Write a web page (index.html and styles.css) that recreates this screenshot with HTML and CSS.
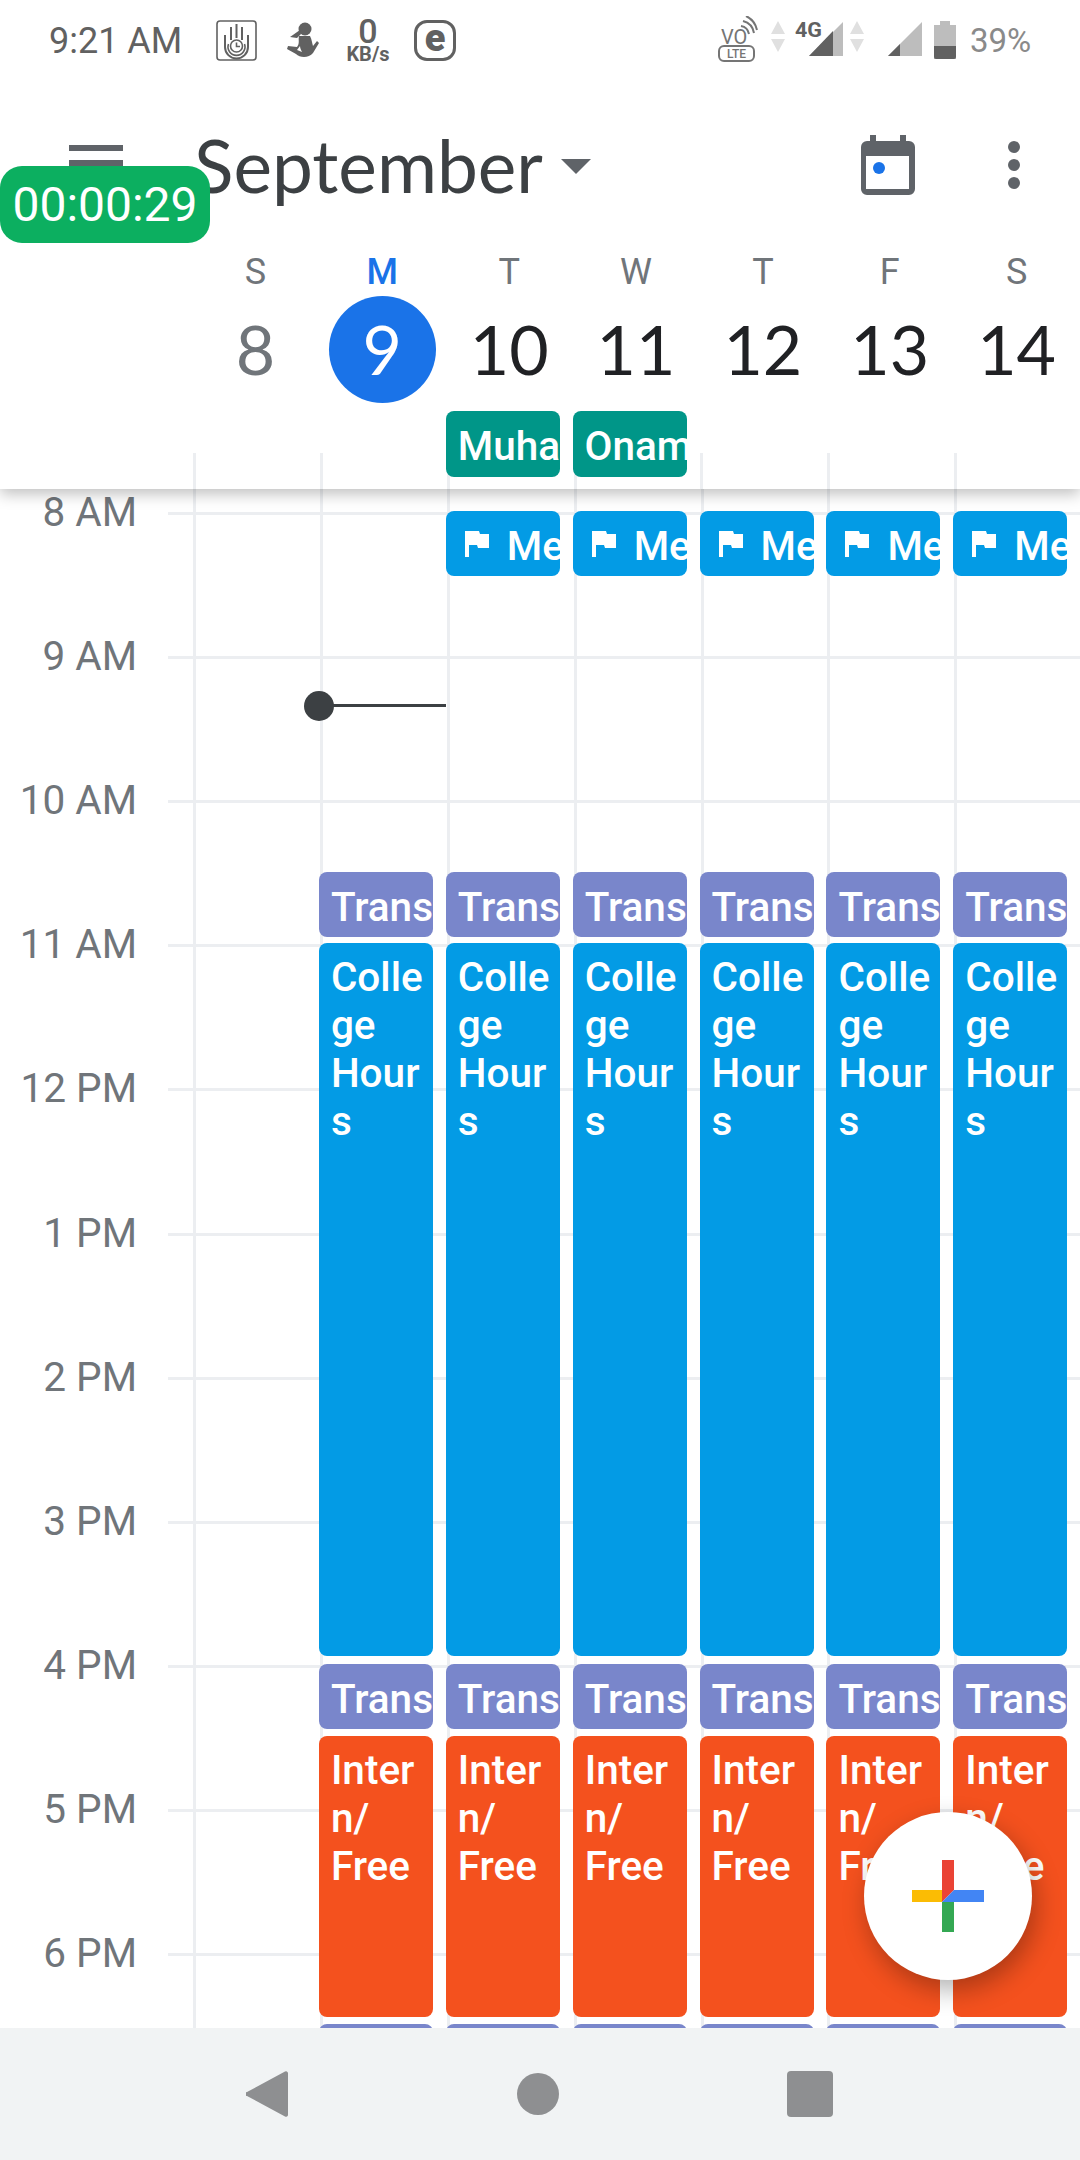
FILE: index.html
```html
<!DOCTYPE html>
<html lang="en">
<head>
    <meta charset="UTF-8">
    <meta name="viewport" content="width=device-width, initial-scale=1.0">
    <title>September - Calendar</title>
    <link rel="stylesheet" href="styles.css">
</head>
<body>

    <div class="header">
        <!-- Status bar -->
        <div class="status">
            <span class="clock">9:21 AM</span>
            <svg class="ic-hand" width="41" height="41" viewBox="0 0 41 41" fill="none" stroke="#616161" stroke-width="1.6">
                <rect x="1" y="1" width="39" height="39" rx="3"/>
                <path d="M15 7V20M20.500 4V18M26 7V20M9 15V27A11.500 11.500 0 0 0 32 27V15" stroke-width="2"/>
                <path d="M12.500 24A8.500 8.500 0 1 0 28.500 24" stroke-width="1.600"/>
                <circle cx="20.500" cy="26" r="6"/>
                <path d="M20.500 22.500V26.500H24"/>
            </svg>
            <svg class="ic-figure" width="32" height="36" viewBox="0 0 32 36" fill="#616161">
                <circle cx="18" cy="7" r="6.500"/>
                <path d="M13 8L3 15L10 16L14 12Z"/>
                <path d="M12 14H23C25 18 25 21 26 24L30 19L32 21L26 31C22 36 13 36 9 32L0 27L1 24L10 25C13 21 11 18 12 14ZM13 24L10 28L15 30C14 28 13 26 13 24Z"/>
            </svg>
            <div class="speed"><span class="speed-num">0</span><span class="speed-unit">KB/s</span></div>
            <div class="ic-e">e</div>

            <svg class="ic-net" width="238" height="46" viewBox="0 0 238 46">
                <text x="3" y="28" font-family="Roboto" font-size="20" fill="#757575">VO</text>
                <path d="M23 10A10 10 0 0 1 31 18M25 5A15 15 0 0 1 36 17M28 0A20 20 0 0 1 39 14" fill="none" stroke="#757575" stroke-width="2"/>
                <rect x="1" y="30" width="35" height="15" rx="5" fill="none" stroke="#757575" stroke-width="2"/>
                <text x="18.500" y="42" text-anchor="middle" font-family="Roboto" font-size="12" font-weight="500" fill="#757575">LTE</text>
                <path d="M60 5L67 18H53ZM60 36L53 23H67Z" fill="#e0e0e0"/>
                <text x="77" y="21" font-family="Roboto" font-size="21" font-weight="700" textLength="27" lengthAdjust="spacingAndGlyphs" fill="#616161">4G</text>
                <path d="M125 6V40H91Z" fill="#bdbdbd"/>
                <path d="M115 15V40H91Z" fill="#616161"/>
                <path d="M139 5L146 18H132ZM139 36L132 23H146Z" fill="#e0e0e0"/>
                <path d="M204 6V40H170Z" fill="#bdbdbd"/>
                <path d="M182 28V40H170Z" fill="#616161"/>
                <path d="M222 5H232V9H238V43H216V9H222Z" fill="#bdbdbd"/>
                <path d="M216 30H238V41A2 2 0 0 1 236 43H218A2 2 0 0 1 216 41Z" fill="#616161"/>
            </svg>
            <span class="battery">39%</span>
        </div>

        <!-- App bar -->
        <div class="appbar">
            <div class="menu"><span></span><span></span><span></span></div>
            <h1 class="month">September</h1>
            <div class="caret"></div>
            <svg class="ic-today" width="54" height="60" viewBox="0 0 54 60">
                <path d="M9 0H15V6H39V0H45V6H48A6 6 0 0 1 54 12V54A6 6 0 0 1 48 60H6A6 6 0 0 1 0 54V12A6 6 0 0 1 6 6H9Z" fill="#5f6368"/>
                <rect x="5" y="21" width="43" height="33" fill="#fff"/>
                <circle cx="18" cy="33" r="6" fill="#1a73e8"/>
            </svg>
            <div class="more"><span></span><span></span><span></span></div>
        </div>

        <!-- Week days -->
        <div class="week">
            <div class="day"><span class="dow">S</span><span class="date past">8</span></div>
            <div class="day today"><span class="dow">M</span><span class="date">9</span></div>
            <div class="day"><span class="dow">T</span><span class="date">10</span></div>
            <div class="day"><span class="dow">W</span><span class="date">11</span></div>
            <div class="day"><span class="dow">T</span><span class="date">12</span></div>
            <div class="day"><span class="dow">F</span><span class="date">13</span></div>
            <div class="day"><span class="dow">S</span><span class="date">14</span></div>
        </div>

        <!-- All day events -->
        <div class="allday">
            <div class="allday-col"></div>
            <div class="allday-col"></div>
            <div class="allday-col"><div class="ev holiday">Muha</div></div>
            <div class="allday-col"><div class="ev holiday">Onam</div></div>
            <div class="allday-col"></div>
            <div class="allday-col"></div>
            <div class="allday-col"></div>
        </div>
    </div>

    <!-- Hour grid -->
    <div class="board">
        <div class="hours">
            <div class="hour">8 AM</div>
            <div class="hour">9 AM</div>
            <div class="hour">10 AM</div>
            <div class="hour">11 AM</div>
            <div class="hour">12 PM</div>
            <div class="hour">1 PM</div>
            <div class="hour">2 PM</div>
            <div class="hour">3 PM</div>
            <div class="hour">4 PM</div>
            <div class="hour">5 PM</div>
            <div class="hour">6 PM</div>
        </div>
        <div class="cols">
            <div class="col"></div>

            <div class="col no-flag">
                <div class="ev transit">Trans</div>
                <div class="ev college">College Hours</div>
                <div class="ev transit">Trans</div>
                <div class="ev intern">Intern/ Free</div>
                <div class="ev transit">Trans</div>
            </div>

            <div class="col">
                <div class="ev flag"><svg class="ic-flag" width="24" height="26" viewBox="0 0 24 26"><path d="M0 0H14L15 3H24V17H13L12 14H4V26H0Z" fill="#fff"/></svg>Me</div>
                <div class="ev transit">Trans</div>
                <div class="ev college">College Hours</div>
                <div class="ev transit">Trans</div>
                <div class="ev intern">Intern/ Free</div>
                <div class="ev transit">Trans</div>
            </div>

            <div class="col">
                <div class="ev flag"><svg class="ic-flag" width="24" height="26" viewBox="0 0 24 26"><path d="M0 0H14L15 3H24V17H13L12 14H4V26H0Z" fill="#fff"/></svg>Me</div>
                <div class="ev transit">Trans</div>
                <div class="ev college">College Hours</div>
                <div class="ev transit">Trans</div>
                <div class="ev intern">Intern/ Free</div>
                <div class="ev transit">Trans</div>
            </div>

            <div class="col">
                <div class="ev flag"><svg class="ic-flag" width="24" height="26" viewBox="0 0 24 26"><path d="M0 0H14L15 3H24V17H13L12 14H4V26H0Z" fill="#fff"/></svg>Me</div>
                <div class="ev transit">Trans</div>
                <div class="ev college">College Hours</div>
                <div class="ev transit">Trans</div>
                <div class="ev intern">Intern/ Free</div>
                <div class="ev transit">Trans</div>
            </div>

            <div class="col">
                <div class="ev flag"><svg class="ic-flag" width="24" height="26" viewBox="0 0 24 26"><path d="M0 0H14L15 3H24V17H13L12 14H4V26H0Z" fill="#fff"/></svg>Me</div>
                <div class="ev transit">Trans</div>
                <div class="ev college">College Hours</div>
                <div class="ev transit">Trans</div>
                <div class="ev intern">Intern/ Free</div>
                <div class="ev transit">Trans</div>
            </div>

            <div class="col">
                <div class="ev flag"><svg class="ic-flag" width="24" height="26" viewBox="0 0 24 26"><path d="M0 0H14L15 3H24V17H13L12 14H4V26H0Z" fill="#fff"/></svg>Me</div>
                <div class="ev transit">Trans</div>
                <div class="ev college">College Hours</div>
                <div class="ev transit">Trans</div>
                <div class="ev intern">Intern/ Free</div>
                <div class="ev transit">Trans</div>
            </div>
        </div>
    </div>

    <!-- Navigation bar -->
    <div class="nav">
        <svg width="42" height="48" viewBox="0 0 42 48"><path d="M39 1.500A2 2 0 0 1 42 3V45A2 2 0 0 1 39 46.500L1 26A2 2 0 0 1 1 22Z" fill="#8e8f91"/></svg>
        <div class="nav-home"></div>
        <div class="nav-recent"></div>
    </div>

    <!-- Things lying over the page -->
    <div class="now"></div>
    <div class="timer">00:00:29</div>
    <div class="fab">
        <svg width="72" height="72" viewBox="0 0 72 72">
            <path d="M30 0H42V30L30 42Z" fill="#ea4335"/>
            <path d="M0 30H30V42H0Z" fill="#fbbc04"/>
            <path d="M30 42L42 30H72V42Z" fill="#4285f4"/>
            <path d="M30 42H42V72H30Z" fill="#34a853"/>
        </svg>
    </div>

</body>
</html>
```

FILE: styles.css
```css
body {
    font-family: 'Roboto', sans-serif;
    background-color: #fff;
    margin: 0;
    width: 1080px;
    height: 2160px;
    overflow: hidden;
    display: flex;
    flex-direction: column;
    position: relative;
}

/* Header */
.header {
    height: 489px;
    flex-shrink: 0;
    background-color: #fff;
    box-shadow: 0 5px 14px rgba(0, 0, 0, 0.25);
    position: relative;
    z-index: 2;
}
.status {
    height: 80px;
    display: flex;
    align-items: center;
    padding-left: 49px;
    color: #616161;
}
.clock {
    font-size: 36px;
    width: 167px;
    padding-top: 2px;
}
.ic-figure {
    margin-left: 30px;
}
.speed {
    width: 46px;
    margin-left: 26px;
    display: flex;
    flex-direction: column;
    align-items: center;
    font-weight: 700;
}
.speed-num {
    font-size: 34px;
    font-weight: 500;
    line-height: 28px;
}
.speed-unit {
    font-size: 20px;
    line-height: 18px;
    white-space: nowrap;
}
.ic-e {
    width: 36px;
    height: 35px;
    margin-left: 23px;
    border: 3px solid #616161;
    border-radius: 13px;
    font-size: 38px;
    font-weight: 900;
    line-height: 30px;
    text-align: center;
}
.ic-net {
    margin-left: 262px;
    margin-top: -3px;
}
.battery {
    font-size: 33px;
    color: #8a8a8a;
    margin-left: 14px;
}

.appbar {
    height: 170px;
    display: flex;
    align-items: center;
}
.menu {
    width: 54px;
    margin-left: 69px;
    margin-top: -4px;
    display: flex;
    flex-direction: column;
    gap: 9px;
}
.menu span {
    height: 6px;
    background-color: #5f6368;
}
.month {
    margin: 0 0 0 71px;
    font-family: 'Lato', sans-serif;
    font-size: 73px;
    font-weight: 400;
    color: #3c4043;
    width: 367px;
}
.caret {
    width: 0;
    height: 0;
    margin-top: 3px;
    border-left: 15px solid transparent;
    border-right: 15px solid transparent;
    border-top: 15px solid #5f6368;
}
.ic-today {
    margin-left: 270px;
}
.more {
    margin-left: 93px;
    display: flex;
    flex-direction: column;
    gap: 6px;
}
.more span {
    width: 12px;
    height: 12px;
    border-radius: 50%;
    background-color: #5f6368;
}

.week {
    display: flex;
    padding-left: 192px;
}
.day {
    width: 126.9px;
    display: flex;
    flex-direction: column;
    align-items: center;
}
.dow {
    font-size: 36px;
    line-height: 42px;
    color: #70757a;
    margin: 1px 0 3px;
}
.date {
    width: 107px;
    height: 107px;
    border-radius: 50%;
    font-family: 'Lato', sans-serif;
    font-size: 68px;
    line-height: 105px;
    text-align: center;
    color: #202124;
}
.date.past {
    color: #70757a;
}
.today .dow {
    color: #1a73e8;
    font-weight: 500;
}
.today .date {
    background-color: #1a73e8;
    color: #fff;
}
.allday {
    display: flex;
    padding: 8px 0 0 192px;
    height: 78px;
}
.allday-col {
    width: 126.9px;
    background: linear-gradient(#eceef1, #eceef1) 1px 100% / 3px 36px no-repeat;
}

/* Events */
.ev {
    width: 114px;
    box-sizing: border-box;
    padding: 10px 0 0 12px;
    border-radius: 8px;
    overflow: hidden;
    color: #fff;
    font-size: 40.5px;
    font-weight: 500;
    line-height: 48px;
}
.holiday {
    height: 66px;
    padding-top: 11px;
    background-color: #009688;
    white-space: nowrap;
}
.flag {
    height: 65px;
    margin: 22px 0 296px;
    padding: 11px 0 0 19px;
    background-color: #039be5;
    white-space: nowrap;
    display: flex;
}
.ic-flag {
    flex-shrink: 0;
    margin: 9px 18px 0 0;
}
.transit {
    height: 65px;
    padding-top: 11px;
    background-color: #7986cb;
    white-space: nowrap;
}
.college {
    height: 713px;
    margin: 6px 0 8px;
    background-color: #039be5;
    overflow-wrap: anywhere;
}
.intern {
    height: 281px;
    margin: 7px 0;
    background-color: #f4511e;
    overflow-wrap: anywhere;
}

/* Hour grid */
.board {
    flex: 1;
    min-height: 0;
    display: flex;
    overflow: hidden;
}
.hours {
    width: 168px;
    flex-shrink: 0;
    margin-top: -49px;
    padding-right: 31px;
    box-sizing: border-box;
}
.hour {
    height: 144.1px;
    display: flex;
    align-items: center;
    justify-content: flex-end;
    font-size: 40.5px;
    color: #70757a;
    white-space: nowrap;
}
.cols {
    flex: 1;
    display: flex;
    padding-left: 24px;
    background-image: repeating-linear-gradient(to bottom, transparent -118.1px, transparent 23px, #eceef1 23px, #eceef1 26px);
}
.col {
    width: 126.9px;
    flex-shrink: 0;
    background: linear-gradient(#eceef1, #eceef1) 1px 0 / 3px 100% no-repeat;
}
.no-flag {
    padding-top: 383px;
}

/* Navigation bar */
.nav {
    height: 132px;
    flex-shrink: 0;
    background-color: #f1f3f4;
    display: flex;
    align-items: center;
    justify-content: space-between;
    padding: 0 247px 0 246px;
    position: relative;
    z-index: 1;
}
.nav-home {
    width: 42px;
    height: 42px;
    border-radius: 50%;
    background-color: #8e8f91;
}
.nav-recent {
    width: 46px;
    height: 46px;
    border-radius: 4px;
    background-color: #8e8f91;
}

/* Overlays */
.now {
    position: absolute;
    left: 319px;
    top: 704px;
    width: 127px;
    height: 3px;
    background-color: #3c4043;
}
.now::before {
    content: "";
    position: absolute;
    left: -15px;
    top: -13px;
    width: 30px;
    height: 30px;
    border-radius: 50%;
    background-color: #3c4043;
}
.timer {
    position: absolute;
    left: 0;
    top: 166px;
    width: 210px;
    height: 77px;
    border-radius: 22px;
    background-color: #0caf60;
    color: #fff;
    font-size: 48px;
    line-height: 77px;
    text-align: center;
    z-index: 3;
}
.fab {
    position: absolute;
    left: 864px;
    top: 1812px;
    width: 168px;
    height: 168px;
    border-radius: 50%;
    background-color: #fff;
    box-shadow: 4px 10px 26px rgba(0, 0, 0, 0.3);
    display: flex;
    align-items: center;
    justify-content: center;
    z-index: 3;
}
```
